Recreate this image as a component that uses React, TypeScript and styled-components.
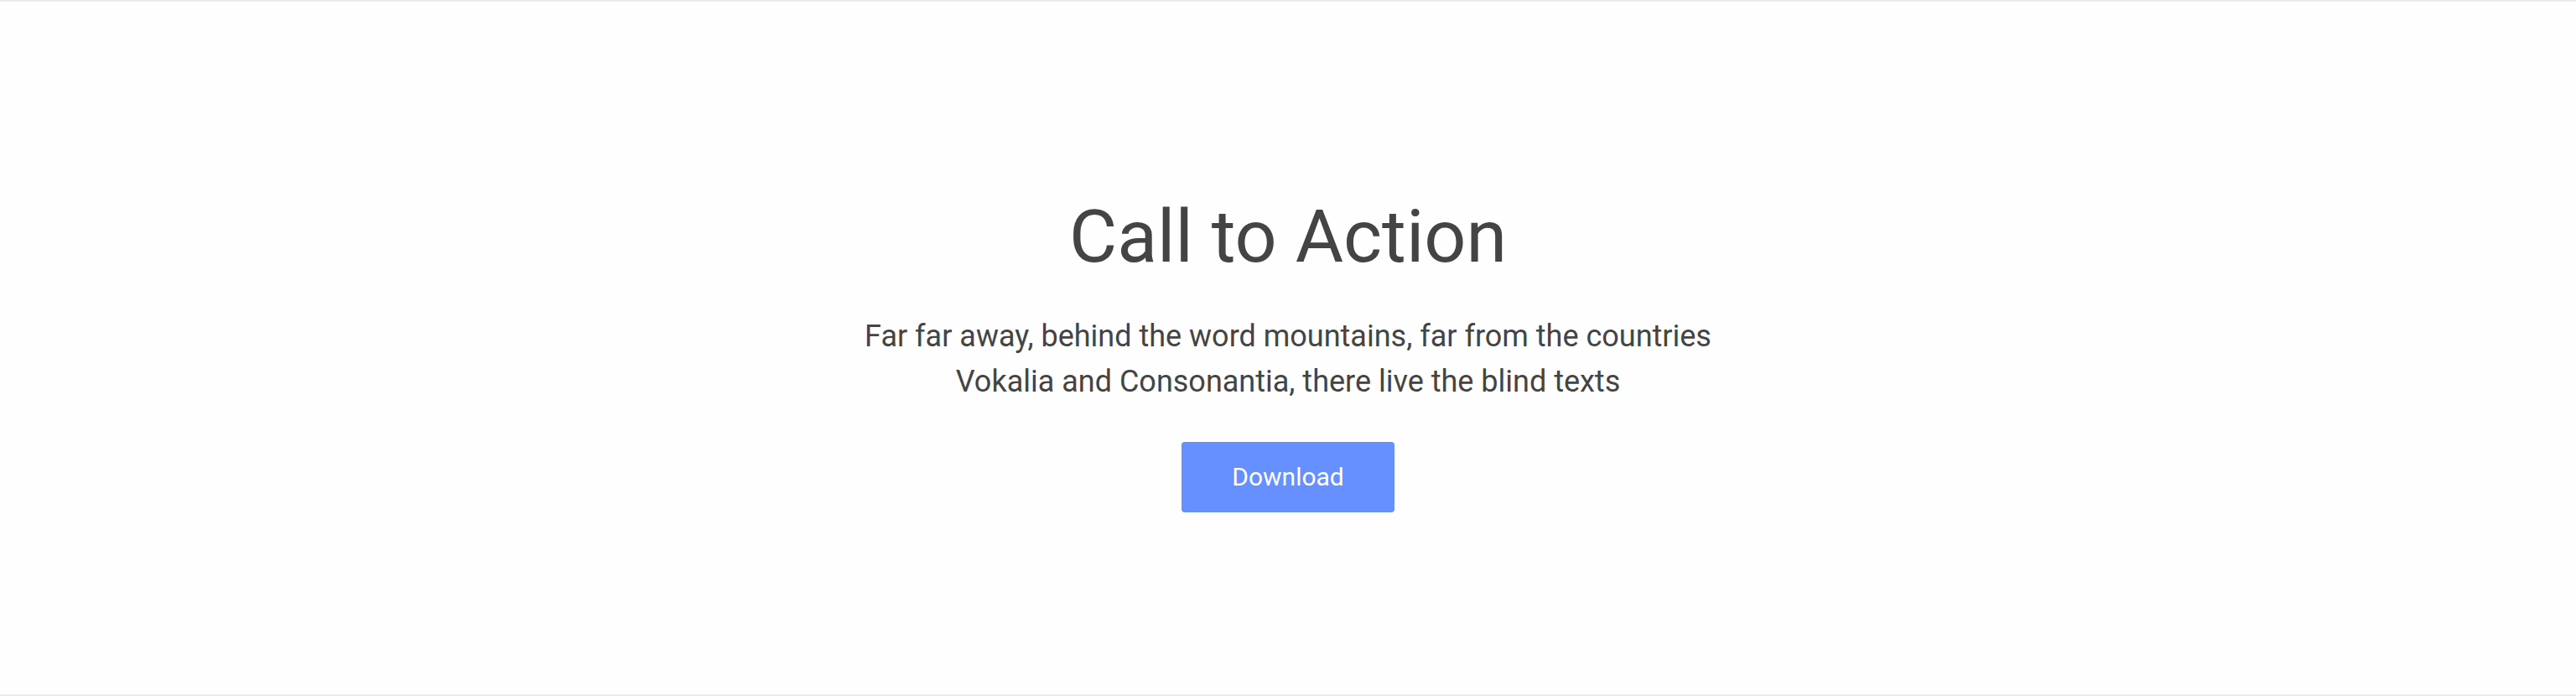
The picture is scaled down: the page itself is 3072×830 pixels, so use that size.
import React from "react";
import styled, { createGlobalStyle } from "styled-components";

const GlobalStyle = createGlobalStyle`
  html, body {
    margin: 0;
    padding: 0;
    background: #ffffff;
  }
  * {
    box-sizing: border-box;
  }
`;

/**
 * call to action block
 */
const Section = styled.section`
  display: flex;
  flex-direction: column;
  align-items: center;
  justify-content: center;
  height: 830px;
  padding-top: 10px;
  border-top: 2px solid #ececec;
  border-bottom: 2px solid #ececec;
  background-color: #fefefe;
  font-family: Roboto, "Liberation Sans", sans-serif;
  text-align: center;
`;

const Title = styled.h2`
  margin: 0 0 39px;
  color: #444444;
  font-size: 88px;
  font-weight: 400;
  line-height: 1.2;
`;

const Lead = styled.p`
  max-width: 1100px;
  margin: 0 0 45px;
  color: #444444;
  font-size: 36px;
  font-weight: 400;
  line-height: 1.5;
`;

const Button = styled.button<{ $wide?: boolean }>`
  height: 84px;
  padding: 0 ${props => (props.$wide ? 80 : 60)}px;
  border: 0;
  border-radius: 4px;
  background-color: #6690ff;
  color: #ffffff;
  font-family: inherit;
  font-size: 30px;
  font-weight: 400;
  cursor: pointer;
`;

export default function App() {
  return (
    <>
      <GlobalStyle />
      <Section>
        <Title>Call to Action</Title>
        <Lead>
          Far far away, behind the word mountains, far from the countries
          <br />
          Vokalia and Consonantia, there live the blind texts
        </Lead>
        <Button>Download</Button>
      </Section>
    </>
  );
}
